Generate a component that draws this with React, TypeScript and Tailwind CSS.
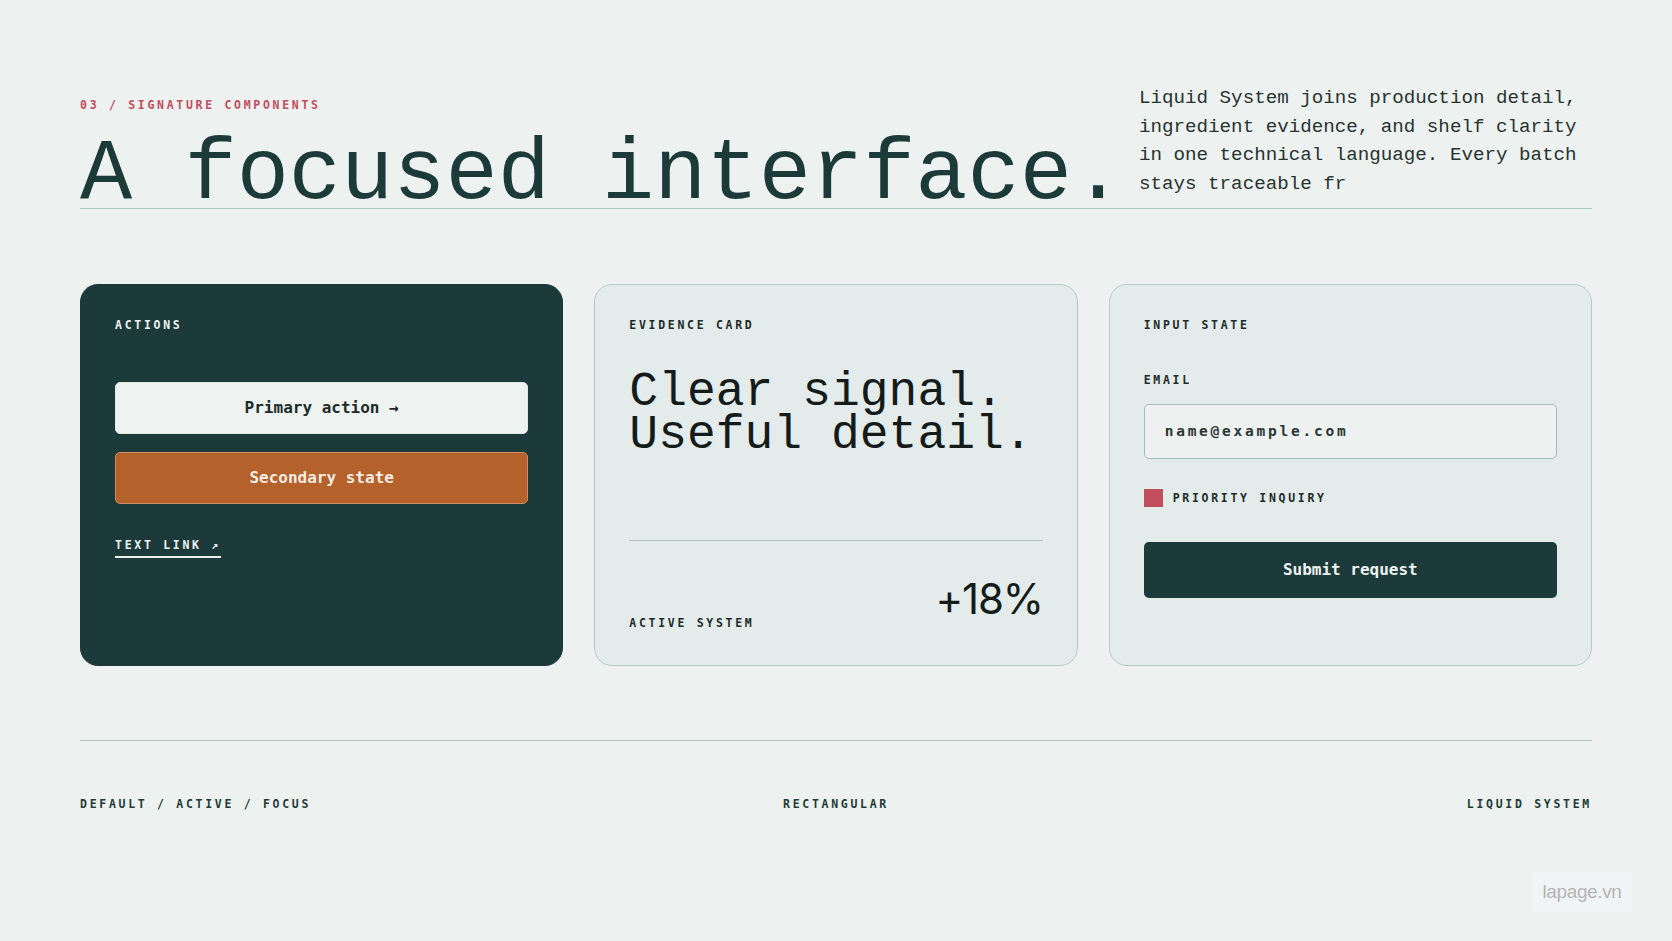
import React from "react";

const mono = { fontFamily: '"Liberation Mono", "DejaVu Sans Mono", monospace' };
const label = { fontFamily: '"DejaVu Sans Mono", "Liberation Mono", monospace' };

function Label({ children, className = "" }: { children: React.ReactNode; className?: string }) {
  return (
    <div
      style={label}
      className={`text-[11.5px] leading-4 font-bold uppercase tracking-[0.235em] ${className}`}
    >
      {children}
    </div>
  );
}

export default function App() {
  return (
    <div className="relative min-h-[941px] w-full bg-[#edf2f1] px-[80px] pt-[84px]">
      {/* Header */}
      <div className="flex items-end justify-between border-b border-[#b3c6c1]">
        <div className="flex flex-col">
          <Label className="mt-[2px] text-[#c24d5d]">03 / Signature components</Label>
          <h1
            style={mono}
            className="mt-[29px] text-[87px] leading-[66px] font-normal text-[#1b3a38] whitespace-nowrap"
          >
            A focused interface.
          </h1>
        </div>
        <p
          style={mono}
          className="mb-[10px] w-[453px] text-[19.2px] leading-[28.5px] text-[#26332f]"
        >
          Liquid System joins production detail, ingredient evidence, and shelf clarity in one
          technical language. Every batch stays traceable fr
        </p>
      </div>

      {/* Cards */}
      <div className="mt-[75px] grid grid-cols-3 gap-[31px]">
        {/* Actions */}
        <div className="flex h-[382px] flex-col rounded-[18px] border border-[#1b3a39] bg-[#1b3a39] px-[34px] pt-[32px]">
          <Label className="text-[#eef3f2]">Actions</Label>
          <button
            style={label}
            className="mt-[49px] h-[52px] w-full rounded-[5px] border border-[#dfe7e5] bg-[#eef2f1] text-[16px] font-bold text-[#1b2b29]"
          >
            Primary action →
          </button>
          <button
            style={label}
            className="mt-[18px] h-[52px] w-full rounded-[5px] border border-[#cf8c5e] bg-[#b5612b] text-[16px] font-bold text-[#f6ece4]"
          >
            Secondary state
          </button>
          <div className="mt-[33px] flex">
            <span
              style={label}
              className="block border-b-2 border-[#eef3f2] pb-[3px] text-[11.5px] leading-4 font-bold uppercase tracking-[0.235em] text-[#eef3f2]"
            >
              Text link ↗
            </span>
          </div>
        </div>

        {/* Evidence */}
        <div className="flex h-[382px] flex-col rounded-[18px] border border-[#b9cac6] bg-[#e4eceb] px-[34px] pt-[32px] pb-[34px]">
          <Label className="text-[#1d2b29]">Evidence card</Label>
          <h2
            style={mono}
            className="mt-[38px] text-[48px] leading-[43px] font-normal text-[#141c1b]"
          >
            Clear signal.
            <br />
            Useful detail.
          </h2>
          <div className="mt-auto border-t border-[#b3c3bf] pt-[37px]">
            <div className="flex items-end justify-between">
              <Label className="text-[#1d2b29]">Active system</Label>
              <div
                style={{ fontFamily: 'Inter, "Noto Sans", sans-serif' }}
                className="mb-[11px] text-[42px] leading-none font-normal tracking-[-0.03em] text-[#141c1b]"
              >
                +18%
              </div>
            </div>
          </div>
        </div>

        {/* Input */}
        <div className="flex h-[382px] flex-col rounded-[18px] border border-[#b9cac6] bg-[#e4eceb] px-[34px] pt-[32px]">
          <Label className="text-[#1d2b29]">Input state</Label>
          <Label className="mt-[39px] text-[#1d2b29]">Email</Label>
          <div className="mt-[16px] flex h-[55px] items-center rounded-[5px] border border-[#a8bcb7] bg-[#edf1f0] pl-[20px]">
            <span
              style={label}
              className="text-[14.5px] font-bold tracking-[0.19em] text-[#2a3634]"
            >
              name@example.com
            </span>
          </div>
          <div className="mt-[30px] flex h-[18px] items-center gap-[10px]">
            <span className="h-[18px] w-[19px] bg-[#c14f5d]" />
            <Label className="text-[#1d2b29]">Priority inquiry</Label>
          </div>
          <button
            style={label}
            className="mt-[35px] h-[56px] w-full rounded-[5px] bg-[#1b3a39] text-[16px] font-bold text-[#eef3f2]"
          >
            Submit request
          </button>
        </div>
      </div>

      {/* Footer */}
      <div className="mt-[74px] border-t border-[#b3c6c1] pt-[55px]">
        <div className="grid grid-cols-3">
          <Label className="text-[#1f3a37]">Default / Active / Focus</Label>
          <Label className="text-center text-[#1f3a37]">Rectangular</Label>
          <Label className="text-right text-[#1f3a37]">Liquid system</Label>
        </div>
      </div>

      {/* Watermark */}
      <div
        style={{ fontFamily: '"Liberation Sans", Arial, sans-serif' }}
        className="absolute left-[1532px] top-[872px] flex h-[40px] w-[100px] items-center justify-center bg-[#f1f4f4] text-[19px] tracking-[-0.02em] text-[#b4b4b4]"
      >
        lapage.vn
      </div>
    </div>
  );
}
